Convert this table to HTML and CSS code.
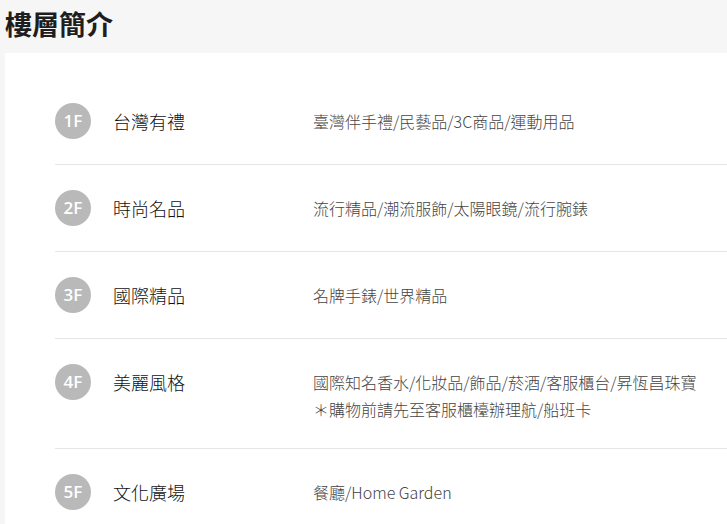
FILE: index.html
```html
<!DOCTYPE html>
<html lang="zh-Hant">
<head>
    <meta charset="UTF-8">
    <meta name="viewport" content="width=device-width, initial-scale=1.0">
    <title>樓層簡介</title>
    <link rel="stylesheet" href="styles.css">
</head>
<body>
    <h1 class="page-title">樓層簡介</h1>
    <div class="floor-card">
        <div class="floor-row">
            <span class="floor-badge">1F</span>
            <span class="floor-name">台灣有禮</span>
            <div class="floor-desc">臺灣伴手禮/民藝品/3C商品/運動用品</div>
        </div>
        <div class="floor-row">
            <span class="floor-badge">2F</span>
            <span class="floor-name">時尚名品</span>
            <div class="floor-desc">流行精品/潮流服飾/太陽眼鏡/流行腕錶</div>
        </div>
        <div class="floor-row">
            <span class="floor-badge">3F</span>
            <span class="floor-name">國際精品</span>
            <div class="floor-desc">名牌手錶/世界精品</div>
        </div>
        <div class="floor-row">
            <span class="floor-badge">4F</span>
            <span class="floor-name">美麗風格</span>
            <div class="floor-desc">國際知名香水/化妝品/飾品/菸酒/客服櫃台/昇恆昌珠寶<br>＊購物前請先至客服櫃檯辦理航/船班卡</div>
        </div>
        <div class="floor-row">
            <span class="floor-badge">5F</span>
            <span class="floor-name">文化廣場</span>
            <div class="floor-desc">餐廳/Home Garden</div>
        </div>
    </div>
</body>
</html>
```

FILE: styles.css
```css
/* Global */
body {
    margin: 0;
    background-color: #f6f6f6;
    font-family: 'Noto Sans CJK TC', 'Noto Sans', sans-serif;
    color: #222;
}

.page-title {
    margin: 0;
    padding: 5px 5px 11px;
    font-size: 27px;
    line-height: 37px;
    font-weight: 700;
    color: #1e1e1e;
}

/* Floor list */
.floor-card {
    margin-left: 5px;
    padding: 25px 0 0 50px;
    background-color: #fff;
}

.floor-row {
    display: flex;
    align-items: flex-start;
    padding: 25px 0;
    border-bottom: 1px solid #e6e6e6;
}

.floor-badge {
    flex: none;
    width: 36px;
    height: 36px;
    margin-right: 22px;
    border-radius: 50%;
    background-color: #b9b9b9;
    color: #fff;
    font-family: 'Open Sans', sans-serif;
    font-size: 17px;
    font-weight: 600;
    line-height: 36px;
    text-align: center;
}

.floor-name {
    flex: none;
    width: 200px;
    padding-top: 5px;
    font-size: 18px;
    font-weight: 300;
    line-height: 27px;
    color: #111;
}

.floor-desc {
    padding-top: 5px;
    font-size: 16px;
    font-weight: 300;
    line-height: 27px;
    color: #444;
}
```
